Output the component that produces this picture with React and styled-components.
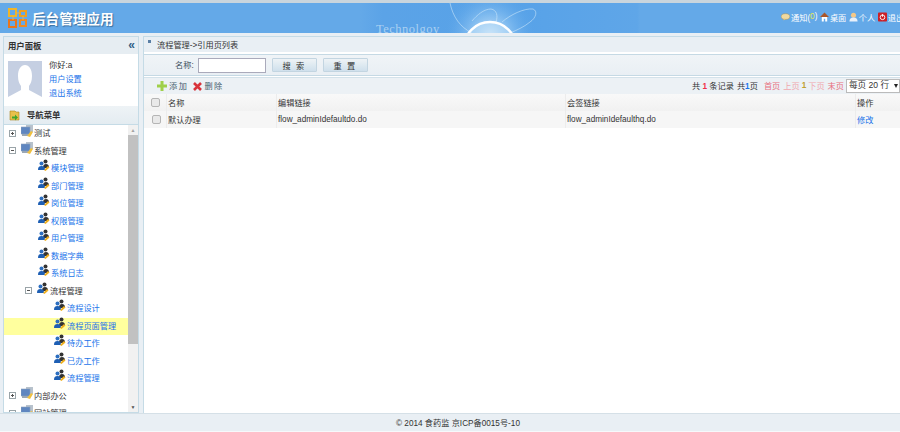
import React from "react";
import styled, { createGlobalStyle } from "styled-components";

const Global = createGlobalStyle`
  html, body { margin: 0; padding: 0; background: #fff; overflow: hidden; }
  body { font-family: "Liberation Sans", "Noto Sans CJK SC", sans-serif; }
  * { box-sizing: border-box; }
`;
const Page = styled.div`
  width: 900px; height: 432px; display: flex; flex-direction: column; overflow: hidden;
  background: #e9eff4; color: #333; font-size: 8.2px;
`;
const Header = styled.header`
  position: relative; height: 33px; flex: none; display: flex; align-items: center;
  justify-content: space-between; padding: 0 0 0 8px; overflow: hidden;
  border-top: 3px solid #c9d5dd; background: #64a9e8;
`;
const Brand = styled.div`position: relative; display: flex; align-items: center; gap: 5px;`;
const Title = styled.h1`
  margin: 0; padding-top: 3px; font-size: 13.6px; line-height: 20px; font-weight: 700; color: #fff;
  text-shadow: 1px 1px 1px #3b6f9f;
`;
const Banner = styled.svg`position: absolute; left: 360px; top: -3px; width: 280px; height: 33px;`;
const TopLinks = styled.nav`
  position: relative; display: flex; align-items: center; gap: 2.5px; margin-top: -3px;
  width: 119px; flex: none; overflow: hidden; white-space: nowrap;
`;
const TopLink = styled.span`
  display: inline-flex; align-items: center; gap: 0; color: #fff; font-size: 8.2px; flex: none;
`;
const Count = styled.b`color: #e7e85a; font-weight: 400;`;
const Body = styled.div`
  flex: 1; min-height: 0; display: flex; gap: 4px; padding: 3px 0 0 3px;
`;
const Side = styled.aside`
  width: 136px; flex: none; display: flex; flex-direction: column;
  border: 1px solid #c5dbe6; background: #fff; overflow: hidden;
`;
const PanelHead = styled.div`
  height: 17px; flex: none; display: flex; align-items: center; justify-content: space-between;
  padding: 0 4px 2px; background: #e6edf2; font-weight: 700; font-size: 8.4px; color: #333;
`;
const Collapse = styled.span`color: #2e5d86; font-size: 12px; font-weight: 700; line-height: 12px; letter-spacing: -1px;`;
const UserBox = styled.div`
  height: 52px; flex: none; display: flex; gap: 7px; padding: 7px 4px 0;
`;
const Avatar = styled.svg`width: 34px; height: 45px; flex: none; background: #c5cfe2;`;
const UserInfo = styled.div`display: flex; flex-direction: column; line-height: 14px; margin-top: -2px;`;
const Link = styled.a`color: #1a74ea; text-decoration: none;`;
const NavHead = styled.div`
  height: 19px; flex: none; display: flex; align-items: center; gap: 7px; padding: 0 5px 2px;
  background: linear-gradient(#eef3f6, #e4ecf1); border-bottom: 1px solid #c5dbe6;
  font-weight: 700; font-size: 8.4px; color: #333;
`;
const TreeWrap = styled.div`flex: 1; min-height: 0; display: flex; overflow: hidden;`;
const Tree = styled.ul`flex: 1; min-width: 0; list-style: none; margin: 0; padding: 0; overflow: hidden;`;
const Node = styled.li`
  height: 17.5px; display: flex; align-items: center; white-space: nowrap; padding-bottom: 3px;
  padding-left: ${p => p.$indent}px; background: ${p => p.$active ? "#ffff9e" : "transparent"};
  color: ${p => p.$link ? "#1a74ea" : "#333"};
`;
const Toggle = styled.span`
  width: 7px; height: 7px; flex: none; margin: 2px 5px 0 0; border: 1px solid #9aa4a8; position: relative; background: #fff;
  &::before { content: ""; position: absolute; left: 1px; right: 1px; top: 2px; height: 1px; background: #555; }
  &::after { content: ""; display: ${p => p.$open ? "none" : "block"}; position: absolute; top: 1px; bottom: 1px; left: 2px; width: 1px; background: #555; }
`;
const Scrollbar = styled.div`
  width: 10px; flex: none; display: flex; flex-direction: column; background: #f1f1f1;
`;
const Arrow = styled.div`
  height: 10px; flex: none; display: flex; align-items: center; justify-content: center;
  color: ${p => p.$dim ? "#a3a3a3" : "#505050"}; font-size: 5px; line-height: 5px;
`;
const Thumb = styled.div`height: 209px; flex: none; background: #c1c1c1;`;
const Track = styled.div`flex: 1;`;
const Main = styled.main`
  flex: 1; min-width: 0; display: flex; flex-direction: column; background: #fff;
  border-left: 1px solid #c5dbe6; border-top: 1px solid #c5dbe6; overflow: hidden;
`;
const Crumb = styled.div`
  height: 15px; flex: none; display: flex; align-items: center; gap: 6px; padding: 0 4px 2px;
  background: #e9eff4; color: #333;
`;
const CrumbMark = styled.span`width: 3px; height: 3px; margin-top: -5px; background: #5a7fa5;`;
const SearchBar = styled.div`
  height: 22px; flex: none; margin-top: 2px; display: flex; align-items: center; padding-left: 31px;
  border-top: 1px solid #c5d9e4; border-bottom: 1px solid #c5d9e4;
  background: linear-gradient(#f0f4f7, #e9eff4); color: #3c4e5c;
`;
const Label = styled.span`padding-bottom: 2px;`;
const NameInput = styled.input`
  width: 68px; height: 15px; margin: 0 6px 0 4px; border: 1px solid #aab; background: #fff; padding: 0;
`;
const SearchButton = styled.button`
  width: 45px; height: 14px; margin-right: 6px; padding: 0 0 2px; border: 1px solid #c3d5e1; border-radius: 1px;
  background: linear-gradient(#eef3f6, #cfe0ec); color: #333; font: inherit; letter-spacing: 1.5px;
`;
const Toolbar = styled.div`
  height: 17px; flex: none; margin-top: 1px; display: flex; align-items: center; justify-content: space-between;
  padding-left: 13px; background: #ecf1f5; border-top: 1px solid #d4e2ea; color: #46606f;
`;
const Actions = styled.div`display: flex; align-items: center; gap: 2px;`;
const Action = styled.span`letter-spacing: 1.5px; margin-right: 3px; padding-bottom: 2px;`;
const Pager = styled.div`display: flex; align-items: center; gap: 3px; color: #333; white-space: nowrap;`;
const PagerText = styled.span`padding-bottom: 2px;`;
const Num = styled.b`color: ${p => p.$c}; font-weight: 700;`;
const PageNum = styled(Num)`margin: 0 -1px; padding-bottom: 2px;`;
const PageLink = styled.span`color: ${p => p.$c || "#e8707e"}; padding-bottom: 2px; margin-left: ${p => p.$gap || 0}px;`;
const SelectBox = styled.div`
  position: relative; width: 54px; height: 14px; flex: none; margin-left: -1px; border: 1px solid #bbb; background: #fff;
  &::after {
    content: ""; position: absolute; right: 1px; top: 4px; border-left: 2.5px solid transparent;
    border-right: 2.5px solid transparent; border-top: 4px solid #222;
  }
`;
const PageSelect = styled.select`
  appearance: none; display: block; width: 100%; height: 100%; padding: 0 0 2px 2px; border: 0; background: transparent;
  font: inherit; font-size: 8.6px; color: #333; outline: 0;
`;
const Row = styled.div`
  display: grid; grid-template-columns: 23px 110px 289px 290px 1fr; height: 17px; flex: none;
  background: ${p => p.$head ? "linear-gradient(#f9f9f9,#f1f1f1)" : "#f6f6f6"}; align-items: stretch;
`;
const Cell = styled.div`
  display: flex; align-items: center; padding: 0 0 ${p => p.$center ? 0 : p.$bottom}px ${p => p.$center ? 0 : 1}px;
  justify-content: ${p => p.$center ? "center" : "flex-start"};
  border-right: ${p => p.$last ? "none" : "1px solid #ececec"}; overflow: hidden; white-space: nowrap;
  color: ${p => p.$blue ? "#1a74ea" : "#333"};
`;
const Check = styled.span`
  width: 9px; height: 9px; border: 1px solid #b5b5b5; border-radius: 2px; background: #e9e9e9;
  margin-left: ${p => p.$shift || 0}px;
`;
const Grow = styled.div`flex: 1;`;
const Footer = styled.footer`
  height: 19px; flex: none; display: flex; align-items: center; justify-content: center;
  padding: 0 0 3px 16px; background: #e9eff4; border-top: 1px solid #d5e0e7; color: #333; font-size: 8.2px;
  box-shadow: inset 0 -1px 0 #f6f9fb;
`;

const Logo = () => (
  <svg width="19" height="20" viewBox="0 0 19 20">
    <g fill="none" strokeWidth="2">
      <rect x="1" y="1" width="7" height="7" stroke="#f0b52a" />
      <rect x="12" y="3" width="6" height="5" stroke="#f0a020" />
      <rect x="1" y="12" width="7" height="7" stroke="#e8761e" />
      <rect x="12" y="12" width="6" height="6" stroke="#ef8a1f" />
      <path d="M8 5h4M5 8v4M15 8v4" stroke="#f0b040" strokeWidth="1" />
    </g>
  </svg>
);
const TreeFolder = () => (
  <svg width="12" height="13" viewBox="0 0 12 13" style={{ marginRight: 1, marginTop: -2, flex: "none" }}>
    <rect x="5" y="0" width="7" height="7" fill="#b8c2cc" />
    <rect x="0" y="2" width="9" height="7" fill="#5f86c0" stroke="#8aa0bd" strokeWidth=".6" />
    <rect x="1" y="9" width="7" height="2" fill="#9aa7b5" />
    <path d="M6 11l4-5 2 1-3 5z" fill="#f0c040" />
  </svg>
);
const People = () => (
  <svg width="12" height="12" viewBox="0 0 12 12" style={{ marginRight: 1, marginTop: -4, flex: "none" }}>
    <circle cx="7.500" cy="2.500" r="2" fill="#333" />
    <path d="M5 9c0-3 1-4 3-4s3 1 3 4z" fill="#333" />
    <circle cx="3.500" cy="4.500" r="2" fill="#2d6fc0" />
    <path d="M0 11c0-3 1-4 3.500-4S7 8 7 11z" fill="#1e5fb4" />
    <path d="M6 11l4-4 1.500 1.500-4 3.500z" fill="#f0b020" />
  </svg>
);
const Small = ({ children }) => <svg width="9" height="10" viewBox="0 0 10 10" style={{ flex: "none", marginRight: 1 }}>{children}</svg>;

const children1 = ["模块管理", "部门管理", "岗位管理", "权限管理", "用户管理", "数据字典", "系统日志"];
const children2 = ["流程设计", "流程页面管理", "待办工作", "已办工作", "流程管理"];

export default function App() {
  return (
    <Page>
      <Global />
      <Header>
        <Banner viewBox="360 0 280 33">
          <defs>
            <linearGradient id="band" x1="0" x2="1" y1="0" y2="0">
              <stop offset="0" stopColor="#5ba3e7" stopOpacity="0" />
              <stop offset=".08" stopColor="#5ba3e7" />
              <stop offset=".55" stopColor="#57a2e8" />
              <stop offset=".99" stopColor="#5fa6e8" />
              <stop offset="1" stopColor="#64a9e8" />
            </linearGradient>
            <radialGradient id="glow" cx="490" cy="36" r="46" gradientUnits="userSpaceOnUse">
              <stop offset="0" stopColor="#ffffff" stopOpacity=".8" />
              <stop offset=".45" stopColor="#bfe2fb" stopOpacity=".4" />
              <stop offset="1" stopColor="#5aa5e8" stopOpacity="0" />
            </radialGradient>
          </defs>
          <rect x="360" width="280" height="33" fill="url(#band)" />
          <circle cx="490" cy="36" r="46" fill="url(#glow)" />
          <g fill="none" stroke="#d8eefc" strokeWidth=".7" opacity=".75">
            <path d="M450 3c3 14 10 24 22 30" />
            <path d="M472 21c5-6 12-12 19-12 6 1 7 7 5 13" />
            <path d="M502 22c8-7 22-14 31-13 5 2 3 9-3 13-6 5-13 8-20 11" />
          </g>
          <circle cx="490" cy="48" r="26" fill="#bfe0f8" fillOpacity=".55" stroke="#fff" strokeWidth="2.500" />
          <text x="376" y="33" fontFamily="Liberation Serif, serif" fontSize="12.500" fill="#a9d0f2" letterSpacing=".5">Technolgoy</text>
        </Banner>
        <Brand>
          <Logo />
          <Title>后台管理应用</Title>
        </Brand>
        <TopLinks>
          <TopLink>
            <Small><ellipse cx="5" cy="4.500" rx="4.800" ry="3.200" fill="#efd9a0" stroke="#b08a40" strokeWidth=".5" /><path d="M3 7l0 2 2-2z" fill="#e8c878" /></Small>
            通知(<Count>0</Count>)
          </TopLink>
          <TopLink>
            <Small><path d="M5 1L.5 5h1.500v5h2.200V7h1.600v3H8V5h1.500z" fill="#fff" /><path d="M5 0L0 5h10z" fill="#a8562a" /></Small>
            桌面
          </TopLink>
          <TopLink>
            <Small><circle cx="5" cy="3" r="2.800" fill="#f4c888" /><path d="M.5 10c0-3 1.500-4.500 4.500-4.500S9.500 7 9.500 10z" fill="#e8f0fa" /></Small>
            个人
          </TopLink>
          <TopLink>
            <Small><rect width="10" height="10" rx="1" fill="#cc2027" /><circle cx="5" cy="5.300" r="2.600" fill="none" stroke="#fff" strokeWidth="1" /><path d="M5 1.800v3" stroke="#fff" strokeWidth="1" /></Small>
            退出
          </TopLink>
        </TopLinks>
      </Header>
      <Body>
        <Side>
          <PanelHead>用户面板<Collapse>«</Collapse></PanelHead>
          <UserBox>
            <Avatar viewBox="0 0 34 45">
              <path d="M10 15c0-7 3-11 7-11s7 4 7 11c0 5-1.500 8-3 10v4l13 7v9H0v-9l13-7v-4c-1.500-2-3-5-3-10z" fill="#fff" />
            </Avatar>
            <UserInfo>
              <span>你好:a</span>
              <Link>用户设置</Link>
              <Link>退出系统</Link>
            </UserInfo>
          </UserBox>
          <NavHead>
            <svg width="11" height="11" viewBox="0 0 11 11" style={{ flex: "none", marginTop: 2 }}>
              <path d="M1 1h5l1 1h3v8H1z" fill="#e8c04a" stroke="#a88520" strokeWidth=".6" />
              <path d="M3 6.500h3V4.500l3 3-3 3V8.500H3z" fill="#3fa52e" />
            </svg>
            导航菜单
          </NavHead>
          <TreeWrap>
            <Tree>
              <Node $indent={5}><Toggle /><TreeFolder />测试</Node>
              <Node $indent={5}><Toggle $open /><TreeFolder />系统管理</Node>
              {children1.map(t => <Node key={t} $indent={34} $link><People />{t}</Node>)}
              <Node $indent={21}><Toggle $open /><People />流程管理</Node>
              {children2.map(t => (
                <Node key={t} $indent={50} $link $active={t === "流程页面管理"}><People />{t}</Node>
              ))}
              <Node $indent={5}><Toggle /><TreeFolder />内部办公</Node>
              <Node $indent={5}><Toggle /><TreeFolder />网站管理</Node>
            </Tree>
            <Scrollbar>
              <Arrow $dim>▲</Arrow>
              <Thumb />
              <Track />
              <Arrow>▼</Arrow>
            </Scrollbar>
          </TreeWrap>
        </Side>
        <Main>
          <Crumb><CrumbMark />流程管理-&gt;引用页列表</Crumb>
          <SearchBar>
            <Label>名称:</Label>
            <NameInput />
            <SearchButton>搜 索</SearchButton>
            <SearchButton>重 置</SearchButton>
          </SearchBar>
          <Toolbar>
            <Actions>
              <svg width="10" height="10" viewBox="0 0 10 10"><path d="M3.500 0h3v3.500H10v3H6.500V10h-3V6.500H0v-3h3.500z" fill="#9fd04a" /></svg>
              <Action>添加</Action>
              <svg width="9" height="9" viewBox="0 0 9 9"><path d="M1 1l7 7M8 1L1 8" stroke="#d8333a" strokeWidth="2.600" /></svg>
              <Action>删除</Action>
            </Actions>
            <Pager>
              <PagerText>共 <Num $c="#f0304a">1</Num> 条记录</PagerText>
              <PagerText>共<Num $c="#1a74ea">1</Num>页</PagerText>
              <PageLink $gap={3}>首页</PageLink>
              <PageLink $c="#f0a8ae">上页</PageLink>
              <PageNum $c="#c0a030">1</PageNum>
              <PageLink $c="#f0a8ae">下页</PageLink>
              <PageLink>末页</PageLink>
              <SelectBox>
                <PageSelect defaultValue="20"><option value="20">每页 20 行</option></PageSelect>
              </SelectBox>
            </Pager>
          </Toolbar>
          <Row $head>
            <Cell $center><Check /></Cell>
            <Cell $bottom={2}>名称</Cell>
            <Cell $bottom={2}>编辑链接</Cell>
            <Cell $bottom={2}>会签链接</Cell>
            <Cell $last $bottom={2}>操作</Cell>
          </Row>
          <Row>
            <Cell $center><Check $shift={3} /></Cell>
            <Cell $bottom={1}>默认办理</Cell>
            <Cell $bottom={1}>flow_adminIdefaultdo.do</Cell>
            <Cell $bottom={1}>flow_adminIdefaulthq.do</Cell>
            <Cell $last $blue $bottom={1}>修改</Cell>
          </Row>
          <Grow />
        </Main>
      </Body>
      <Footer>© 2014 食药监 京ICP备0015号-10</Footer>
    </Page>
  );
}
